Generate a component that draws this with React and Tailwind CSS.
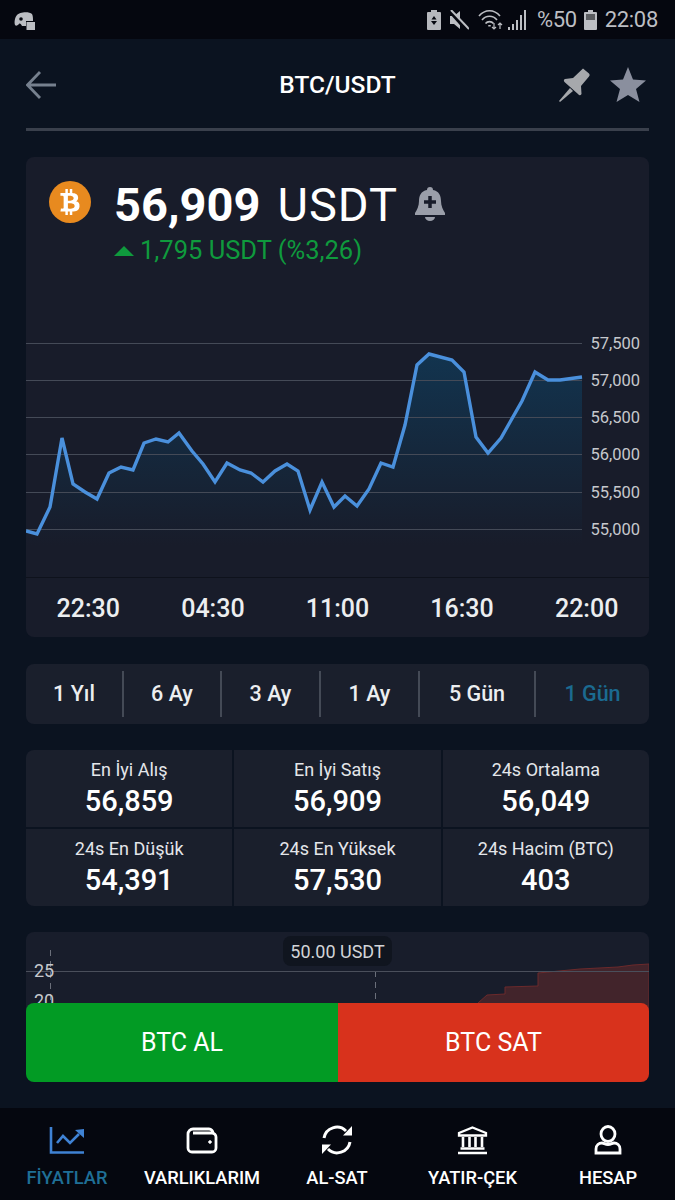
import React from 'react';
import { FaBtc } from 'react-icons/fa';

const linePoints = [
  [26, 531], [37, 534], [50, 507], [62, 438], [73, 484], [85, 492], [97, 499], [109, 473], [121, 467], [133, 470],
  [144, 443], [156, 439], [168, 442], [179, 433], [192, 451], [203, 464], [215, 482], [227, 463], [240, 470], [251, 473],
  [263, 482], [275, 471], [287, 464], [298, 471], [310, 510], [322, 482], [334, 507], [345, 496], [357, 506], [369, 489],
  [381, 463], [393, 467], [405, 425], [417, 365], [429, 354], [452, 360], [464, 372], [476, 437], [488, 453], [501, 438],
  [522, 401], [535, 372], [548, 380], [560, 380], [582, 377],
];
const linePath = linePoints.map((p) => p.join(',')).join(' ');
const areaPath = `26,545 ${linePath} 582,545`;

const yLabels = [
  ['57,500', 343], ['57,000', 380], ['56,500', 417], ['56,000', 454], ['55,500', 492], ['55,000', 529],
];
const xLabels = ['22:30', '04:30', '11:00', '16:30', '22:00'];

const periods = [
  { label: '1 Yıl', width: 'w-[98px]' },
  { label: '6 Ay', width: 'w-[98px]' },
  { label: '3 Ay', width: 'w-[99px]' },
  { label: '1 Ay', width: 'w-[99px]' },
  { label: '5 Gün', width: 'w-[116px]' },
  { label: '1 Gün', width: 'flex-1', active: true },
];

const stats = [
  ['En İyi Alış', '56,859'], ['En İyi Satış', '56,909'], ['24s Ortalama', '56,049'],
  ['24s En Düşük', '54,391'], ['24s En Yüksek', '57,530'], ['24s Hacim (BTC)', '403'],
];

const StatusBar = () => (
  <div className="h-[39px] bg-[#05070f] flex items-center pl-[14px] pr-[17px] text-[#bcbec3]">
    <svg width="22" height="21" viewBox="0 0 22 21" fill="#bcbec3">
      <path d="M3 6c2-3 12-4 15-1 1 2 1 4 1 7h-7v5H8c-1-2-2-3-3-2-2 2-3 2-4 1-1-3 0-8 2-10z" />
      <rect x="12.500" y="13" width="8.500" height="8" />
      <circle cx="7" cy="10" r="1.800" fill="#05070f" />
    </svg>
    <div className="ml-auto flex items-center">
      <svg width="14" height="20" viewBox="0 0 14 20" fill="#b6b8bd">
        <path d="M4 0h6v2h3a1 1 0 0 1 1 1v16a1 1 0 0 1-1 1H1a1 1 0 0 1-1-1V3a1 1 0 0 1 1-1h3z" />
        <path d="M7 6l2.500 3.500h-5zM4 11h6l-3 4z" fill="#05070f" />
      </svg>
      <svg className="ml-[9px]" width="19" height="20" viewBox="0 0 19 20" fill="#bcbec3">
        <path d="M0 6h4l6-5v18l-6-5H0z" />
        <path d="M0 1l17 19" stroke="#05070f" strokeWidth="4" />
        <path d="M1 0l18 19" stroke="#bcbec3" strokeWidth="2" />
      </svg>
      <svg className="ml-[9px]" width="26" height="22" viewBox="0 0 26 22" fill="none" stroke="#bcbec3" strokeWidth="1.600">
        <path d="M1 7c6-7 15-7 21 0" />
        <path d="M4 11c4-5 11-5 15 0" />
        <path d="M7.500 14.500c2-2.500 6-2.500 8 0" />
        <path d="M11.500 16v1.500" strokeWidth="2.500" />
        <path d="M16 14v6M14 18l2 2 2-2M22 20v-6M20 16l2-2 2 2" strokeWidth="1.200" />
      </svg>
      <svg className="ml-[4px]" width="19" height="20" viewBox="0 0 19 20" fill="#bcbec3">
        <rect x="0" y="17" width="2" height="3" />
        <rect x="4" y="14" width="2" height="6" />
        <rect x="8" y="10" width="2" height="10" />
        <rect x="12" y="5" width="2" height="15" />
        <rect x="16" y="0" width="2" height="20" />
      </svg>
      <span className="ml-[10px] text-[22px] leading-none tracking-[-0.4px]">%50</span>
      <svg className="ml-[7px]" width="13" height="20" viewBox="0 0 13 20" fill="#bcbec3">
        <path d="M4 0h5v2h3a1 1 0 0 1 1 1v16a1 1 0 0 1-1 1H1a1 1 0 0 1-1-1V3a1 1 0 0 1 1-1h3z" />
        <rect x="2" y="4" width="9" height="6" fill="#5a5c60" />
      </svg>
      <span className="ml-[8px] text-[22px] leading-none tracking-[-0.3px]">22:08</span>
    </div>
  </div>
);

const Header = () => (
  <div className="mx-[26px] h-[92px] border-b-[3px] border-[#3a404c] flex items-center justify-between relative pt-[3px]">
    <svg width="30" height="30" viewBox="0 0 30 30" fill="none" stroke="#76808e" strokeWidth="2.800">
      <path d="M30 15H2M14 2L1.500 15 14 28" />
    </svg>
    <span className="absolute left-0 right-0 text-center text-[24.500px] font-medium text-white">BTC/USDT</span>
    <div className="flex items-center gap-[16px] pr-[3px]">
      <svg width="36" height="36" viewBox="0 0 36 36" fill="#a6a8ac">
        <path d="M25 1.500L31 6.500Q32.500 8 31 9.500L23 19 23.500 27Q22 29.500 20 27L6.500 15Q5 13 7 12L15 11z" />
        <path d="M12 21l3 3L2 35l-1-1z" />
      </svg>
      <svg width="36" height="36" viewBox="0 0 36 36" fill="#8a8f9e">
        <polygon points="18,0 23,12.500 36,13.500 26,22 29.500,35 18,28 6.500,35 10,22 0,13.500 13,12.500" />
      </svg>
    </div>
  </div>
);

const PriceCard = () => (
  <div className="mx-[26px] mt-[26px] h-[480px] rounded-lg bg-[#181c2a] flex flex-col">
    <div className="h-[133px] pt-[24px] pl-[23px] flex">
      <div className="w-[42px] h-[42px] rounded-full bg-[#e88a1f] flex items-center justify-center text-white">
        <FaBtc className="w-[26px] h-[26px]" />
      </div>
      <div className="ml-[23px] -mt-[5px]">
        <div className="flex items-center h-[56px] text-white text-[47px] leading-none">
          <span className="font-bold">56,909</span>
          <span className="ml-[17px] tracking-[1px]">USDT</span>
          <svg className="ml-[17px] mt-[-1px]" width="30" height="34" viewBox="0 0 30 34" fill="#9a9ea9">
            <path d="M15 0a3 3 0 0 1 3 3c6 1 8 6 8 11 0 5 2 9 4 12v2H0v-2c2-3 4-7 4-12 0-5 2-10 8-11a3 3 0 0 1 3-3z" />
            <path d="M10 30h10a5 4 0 0 1-10 0z" />
            <path d="M15 9v12M9 15h12" stroke="#181c2a" strokeWidth="3.500" />
          </svg>
        </div>
        <div className="flex items-center text-[25.500px] leading-none text-[#0f9a3d] mt-[6px]">
          <span className="w-0 h-0 border-l-[10px] border-r-[10px] border-b-[10px] border-l-transparent border-r-transparent border-b-[#0f9a3d]" />
          <span className="ml-[6px]">1,795 USDT (%3,26)</span>
        </div>
      </div>
    </div>
    <svg className="block w-[623px] h-[287px]" viewBox="26 290 623 287">
      <defs>
        <linearGradient id="area" x1="0" y1="0" x2="0" y2="1">
          <stop offset="0%" stopColor="#12344f" />
          <stop offset="100%" stopColor="#181c2a" />
        </linearGradient>
      </defs>
      <polygon points={areaPath} fill="url(#area)" />
      {yLabels.map(([label, y]) => (
        <g key={label}>
          <line x1="26" x2="582" y1={y + 0.5} y2={y + 0.5} stroke="#444a57" strokeWidth="1" />
          <text x="640" y={y + 6} textAnchor="end" fontSize="16.500" fill="#c6c8cd">{label}</text>
        </g>
      ))}
      <polyline points={linePath} fill="none" stroke="#4a90dc" strokeWidth="3.400" strokeLinejoin="miter" />
    </svg>
    <div className="flex-1 border-t border-[#0e121c] flex justify-around items-center pt-[3px] text-[25px] font-medium text-[#eceef0]">
      {xLabels.map((t) => (
        <span key={t} className="w-[124.600px] text-center">{t}</span>
      ))}
    </div>
  </div>
);

const PeriodBar = () => (
  <div className="mx-[26px] mt-[27px] h-[60px] rounded-lg bg-[#1a1f2c] flex items-center text-[21.500px] font-medium">
    {periods.map((p, i) => (
      <div key={p.label} className={`${p.width} h-[46px] flex items-center justify-center ${i < 5 ? 'border-r-2 border-[#444a56]' : ''} ${p.active ? 'text-[#1b6a90]' : 'text-[#eceef0]'}`}>
        {p.label}
      </div>
    ))}
  </div>
);

const StatsGrid = () => (
  <div className="mx-[26px] mt-[26px] grid grid-cols-3 gap-[2px] rounded-lg overflow-hidden">
    {stats.map(([label, value]) => (
      <div key={label} className="h-[77px] bg-[#1a1f2c] flex flex-col items-center text-white">
        <span className="text-[18px] leading-[20px] mt-[10px] text-[#e4e6ea]">{label}</span>
        <span className="text-[29px] leading-[32px] mt-[5px] font-medium">{value}</span>
      </div>
    ))}
  </div>
);

const DepthChart = () => (
  <div className="mx-[26px] mt-[26px] h-[100px] rounded-t-lg bg-[#181d2b] relative overflow-hidden">
    <svg className="block w-[623px] h-[100px]" viewBox="26 932 623 100">
      <line x1="50.500" x2="50.500" y1="950" y2="1032" stroke="#6a6f7a" strokeDasharray="6 5" />
      <line x1="375.500" x2="375.500" y1="960" y2="1032" stroke="#6a6f7a" strokeDasharray="6 5" />
      <path d="M478 1003L487 995 505 994V987L538 986V973L580 969 618 967 633 965 649 964V1032H478z" fill="#42242b" stroke="#6b2a2c" strokeWidth="1" />
      <line x1="26" x2="649" y1="971.500" y2="971.500" stroke="#4a4f5b" />
      <text x="34" y="977" fontSize="18" fill="#c6c8cd">25</text>
      <text x="34" y="1007" fontSize="18" fill="#c6c8cd">20</text>
    </svg>
    <div className="absolute left-[257px] top-[4px] w-[109px] h-[30px] rounded-lg bg-[#10151f] flex items-center justify-center text-[18px] text-[#d2d4d8]">
      50.00 USDT
    </div>
  </div>
);

const TradeButtons = () => (
  <div className="absolute left-[26px] right-[26px] bottom-[118px] h-[79px] rounded-lg overflow-hidden flex text-[25px] text-white">
    <div className="w-[312px] bg-[#029b24] flex items-center justify-center">BTC AL</div>
    <div className="flex-1 bg-[#d8321c] flex items-center justify-center">BTC SAT</div>
  </div>
);

const ChartIcon = () => (
  <svg width="38" height="30" viewBox="0 0 38 30" fill="none" stroke="#3f82d4" strokeWidth="2.600">
    <path d="M3 2v25.500h33" />
    <path d="M9 18l6-7 7 7 9-9" />
    <polygon points="36,4 27,5 36,13" fill="#3f82d4" stroke="none" />
  </svg>
);

const WalletIcon = () => (
  <svg width="32" height="27" viewBox="0 0 32 27" fill="none" stroke="#fff" strokeWidth="2.800">
    <path d="M2 7a5 5 0 0 1 5-5h16a4 4 0 0 1 4 4H7M2 7v14a4 4 0 0 0 4 4h20a4 4 0 0 0 4-4V10a4 4 0 0 0-4-4" />
    <circle cx="24" cy="15" r="1.300" fill="#fff" strokeWidth="1" />
  </svg>
);

const SyncIcon = () => (
  <svg width="32" height="30" viewBox="0 0 32 30" fill="none" stroke="#fff" strokeWidth="3">
    <path d="M3 13A13 13 0 0 1 25 6" />
    <polygon points="31,1 31,10.500 22,10.500" fill="#fff" stroke="none" />
    <path d="M29 17A13 13 0 0 1 7 24" />
    <polygon points="1,29 1,19.500 10,19.500" fill="#fff" stroke="none" />
  </svg>
);

const BankIcon = () => (
  <svg width="31" height="29" viewBox="0 0 31 29" fill="none" stroke="#fff" strokeWidth="2.300">
    <path d="M15.500 1.500L29 7v2.500H2V7z" />
    <path d="M6 11v10M12.500 11v10M18.500 11v10M25 11v10" strokeWidth="2.600" />
    <path d="M3.500 22.500h24M1 27h29" />
  </svg>
);

const UserIcon = () => (
  <svg width="28" height="30" viewBox="0 0 28 30" fill="none" stroke="#fff" strokeWidth="2.800">
    <ellipse cx="14" cy="9" rx="7" ry="7.500" />
    <path d="M2 28v-4c0-4 3-6 6-6 2 0 3 1.500 6 1.500s4-1.500 6-1.500c3 0 6 2 6 6v4z" />
  </svg>
);

const navItems = [
  { label: 'FİYATLAR', icon: <ChartIcon />, active: true, width: 'w-[134px]' },
  { label: 'VARLIKLARIM', icon: <WalletIcon />, width: 'w-[136px]' },
  { label: 'AL-SAT', icon: <SyncIcon />, width: 'w-[134px]' },
  { label: 'YATIR-ÇEK', icon: <BankIcon />, width: 'w-[137px]' },
  { label: 'HESAP', icon: <UserIcon />, width: 'flex-1' },
];

const BottomNav = () => (
  <div className="h-[92px] bg-[#05070f] flex">
    {navItems.map((item) => (
      <div key={item.label} className={`${item.width} flex flex-col items-center pt-[16px]`}>
        <div className="h-[32px] flex items-center">{item.icon}</div>
        <span className={`mt-[11px] text-[18.300px] leading-[22px] font-medium ${item.active ? 'text-[#1f6f96]' : 'text-white'}`}>{item.label}</span>
      </div>
    ))}
  </div>
);

export default function App() {
  return (
    <div className="w-[675px] h-[1200px] bg-[#0b1320] flex flex-col overflow-hidden relative font-['Roboto',sans-serif]">
      <StatusBar />
      <Header />
      <PriceCard />
      <PeriodBar />
      <StatsGrid />
      <DepthChart />
      <TradeButtons />
      <div className="mt-auto">
        <BottomNav />
      </div>
    </div>
  );
}
